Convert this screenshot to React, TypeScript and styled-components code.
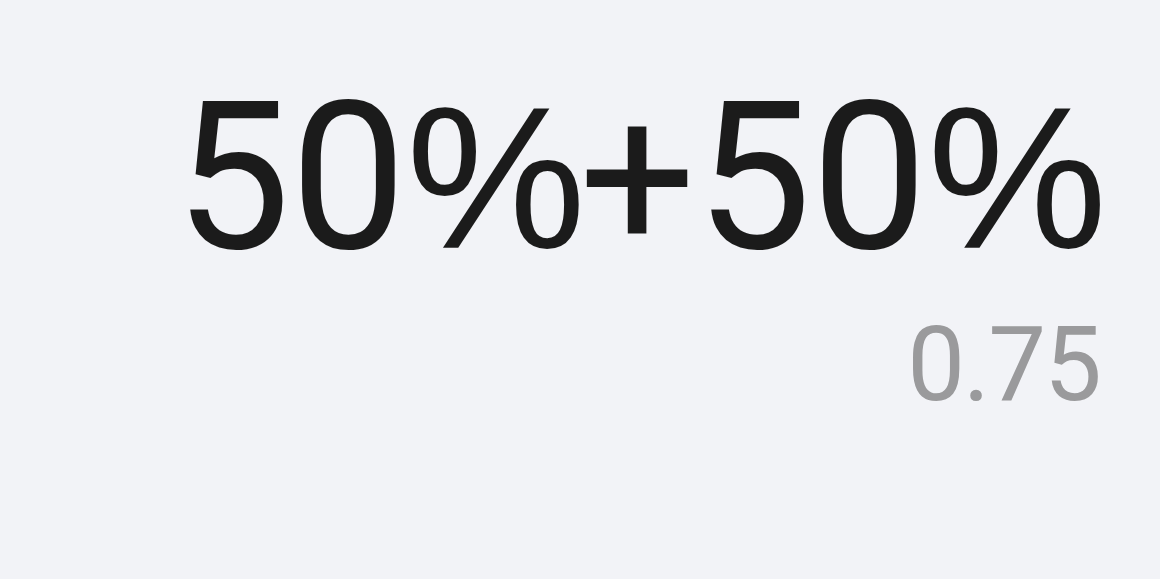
import React from "react";
import styled, { createGlobalStyle } from "styled-components";

const Global = createGlobalStyle`
  html, body { margin: 0; padding: 0; background: #f2f3f7; }
  body { font-family: Roboto, "Noto Sans", sans-serif; }
`;

const Screen = styled.div`
  width: 1160px;
  height: 579px;
  background: #f2f3f7;
  display: flex;
  flex-direction: column;
  align-items: flex-end;
  padding: 58px 57px 0 0;
  box-sizing: border-box;
`;

const Expression = styled.div`
  font-family: Roboto, sans-serif;
  font-weight: 400;
  font-size: 206px;
  line-height: 240px;
  color: #1b1b1b;
  white-space: nowrap;
  margin-right: 3px;
`;

const Percent = styled.span`
  font-family: "Liberation Sans", Arial, sans-serif;
  font-weight: 400;
  font-size: 202px;
  display: inline-block;
  margin: 0 -7px 0 0;
`;

const Result = styled.div`
  font-family: Roboto, sans-serif;
  font-weight: 400;
  font-size: 103px;
  line-height: 120px;
  letter-spacing: -2px;
  color: #9a9a9c;
  margin-top: 7px;
  margin-right: 3px;
`;

export default function App() {
  return (
    <>
      <Global />
      <Screen>
        <Expression>
          50<Percent>%</Percent>+50<Percent>%</Percent>
        </Expression>
        <Result>0.75</Result>
      </Screen>
    </>
  );
}
